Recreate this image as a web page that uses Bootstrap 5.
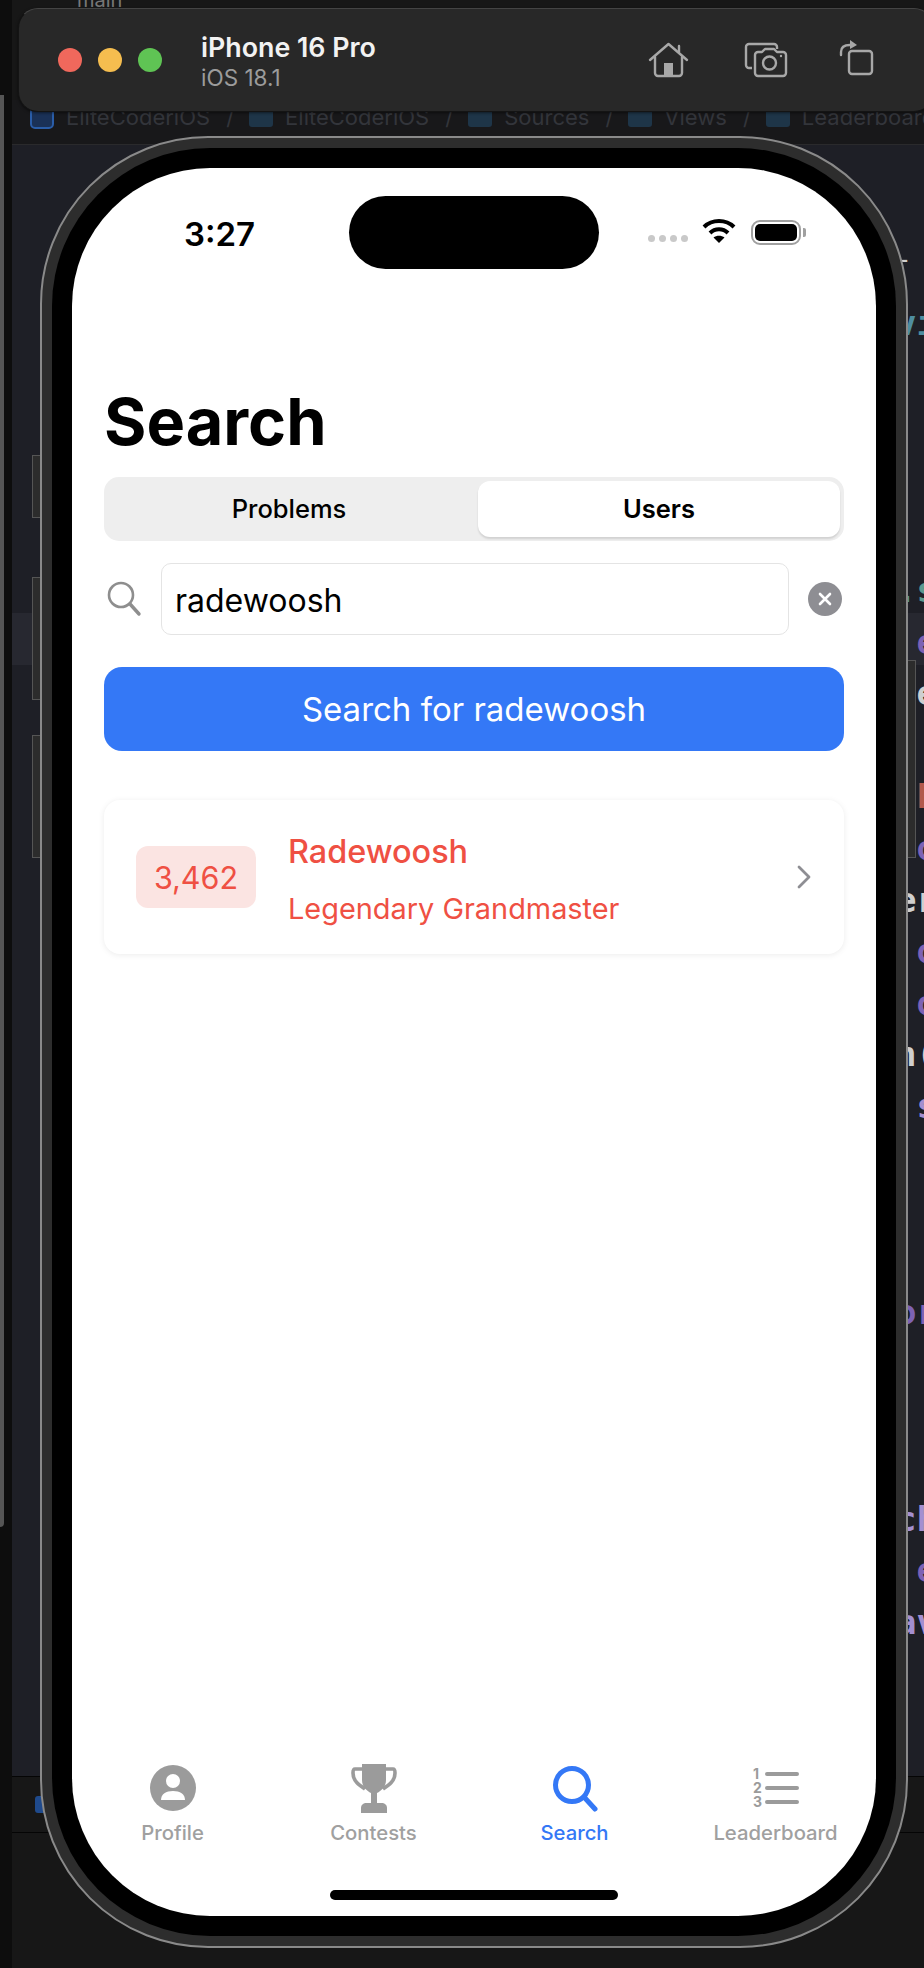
<!DOCTYPE html>
<html lang="en">
<head>
  <meta charset="UTF-8">
  <title>iPhone 16 Pro - Search</title>
  <link href="https://cdn.jsdelivr.net/npm/bootstrap@5.3.3/dist/css/bootstrap.min.css" rel="stylesheet">
  <style>
    html, body { width: 924px; height: 1968px; overflow: hidden; }
    body { background: #171717; font-family: Inter, "Liberation Sans", sans-serif; position: relative; }

    /* xcode window behind the simulator */
    .side-strip { width: 12px; background: #0d0d0d; }
    .side-strip-bar { width: 4px; height: 1432px; margin-top: 95px; background: #555; border-radius: 0 0 4px 0; }
    .top-strip { height: 100px; color: #777; font-size: 20px; line-height: 1; padding-left: 65px; }
    .top-strip-label { margin-top: -10px; }
    .crumbs { height: 45px; padding-left: 18px; padding-bottom: 10px; gap: 12px; color: #33353b; font-size: 22px; white-space: nowrap; background: #18181a; border-bottom: 1px solid #2a2a2c; overflow: hidden; }
    .crumb-folder { width: 24px; height: 20px; background: #1e3548; border-radius: 3px; flex: none; }
    .crumb-app { width: 24px; height: 24px; border: 2px solid #2a5da8; background: #1a3157; border-radius: 5px; flex: none; }
    .crumb-sep { margin: 0 3px 0 4px; }
    .editor { background: #1e1f26; position: relative; overflow: hidden; }
    .line-band { height: 52px; margin-top: 468px; background: #272830; }
    .code-rows { position: absolute; left: 884px; top: 89px; font-family: "DejaVu Sans Mono", monospace; font-weight: 700; font-size: 34px; line-height: 51.6px; }
    .code-rows div { height: 51.6px; white-space: pre; }
    .code-rows .row-dash { height: 64px; font-weight: 400; font-size: 26px; }
    .code-rows .row-first { height: 60.6px; }
    .c-teal { color: #5c9a90; }
    .c-blue { color: #4f8ea0; }
    .c-purple { color: #7d62b4; }
    .c-lilac { color: #a48fd0; }
    .c-grey { color: #cfcfcf; }
    .c-red { color: #b2594c; }
    .debug-bar { height: 57px; border-top: 1px solid #050505; border-bottom: 1px solid #050505; }
    .debug-blue { width: 14px; height: 17px; margin: 19px 0 0 23px; background: #1f4a8c; border-radius: 3px; }
    .bottom-panel { height: 135px; }

    /* simulator toolbar */
    .sim-toolbar { position: absolute; left: 18px; top: 8px; width: 916px; height: 104px; background: #282828; border: 1px solid #141414; border-top-color: #444; border-radius: 20px; padding-left: 39px; box-shadow: 0 1px 3px rgba(0,0,0,.5); }
    .light { width: 24px; height: 24px; border-radius: 50%; margin-right: 16px; }
    .light-red { background: #f0685c; }
    .light-yellow { background: #f5bd4f; }
    .light-green { background: #5fc454; }
    .sim-title { margin-left: 23px; padding-top: 4px; color: #f2f2f2; font-weight: 600; font-size: 26.8px; line-height: 31px; }
    .sim-sub { color: #9c9c9c; font-weight: 400; font-size: 22.5px; line-height: 29px; }
    .sim-icon { position: absolute; }
    .sim-home { left: 629px; top: 33px; }
    .sim-camera { left: 725px; top: 33px; }
    .sim-rotate { left: 820px; top: 29px; }

    /* phone */
    .phone-btn { position: absolute; background: #2c2c2c; border: 1px solid #555; }
    .phone-btn-1 { left: 32px; top: 455px; width: 12px; height: 63px; }
    .phone-btn-2 { left: 32px; top: 577px; width: 12px; height: 123px; }
    .phone-btn-3 { left: 32px; top: 735px; width: 12px; height: 123px; }
    .phone-btn-4 { left: 904px; top: 660px; width: 12px; height: 198px; }
    .phone { position: absolute; left: 40px; top: 136px; width: 868px; height: 1812px; border: 2px solid #8a8a8a; border-radius: 168px; background: #2d2d2d; padding: 10px; }
    .phone-black { height: 100%; background: #000; border-radius: 158px; padding: 20px; }
    .screen { height: 100%; background: #fff; border-radius: 138px; overflow: hidden; }

    .status-row { height: 101px; padding-top: 28px; }
    .status-time { width: 277px; padding-left: 112px; padding-top: 14px; font-weight: 600; font-size: 33px; color: #000; }
    .island { width: 250px; height: 73px; background: #000; border-radius: 37px; flex: none; }
    .signal-dots { gap: 4px; margin-left: 49px; margin-top: 39px; }
    .signal-dot { width: 7px; height: 7px; border-radius: 50%; background: #c9c9c9; }
    .wifi-icon { margin-left: 14px; margin-top: 22px; }
    .battery { width: 50px; height: 25px; margin-left: 15px; margin-top: 24px; border: 2px solid #a0a0a0; border-radius: 9px; padding: 2px; position: relative; }
    .battery-fill { height: 100%; background: #000; border-radius: 5px; }
    .battery-nub { position: absolute; right: -7px; top: 6px; width: 3px; height: 9px; background: #a0a0a0; border-radius: 0 2px 2px 0; }

    .search-title { margin: 113px 32px 16px; font-weight: 700; font-size: 64.8px; line-height: 79px; color: #000; }
    .seg-bar { margin: 0 32px 22px; height: 64px; background: #eeeeee; border-radius: 15px; padding: 4px; }
    .seg-item { font-size: 25.5px; font-weight: 500; color: #000; text-align: center; line-height: 56px; }
    .seg-plain { flex: 1 1 0; padding-right: 8px; }
    .seg-active { width: 362px; flex: none; background: #fff; font-weight: 600; border-radius: 12px; box-shadow: 0 2px 2px rgba(0,0,0,.12); }
    .search-row { margin: 0 32px 33px; height: 71px; }
    .search-glass { margin-left: 2px; }
    .search-input.form-control { height: 72px; flex: 1 1 0; margin: 0 19px 0 19px; padding: 4px 13px 0; font-family: inherit; font-size: 32px; color: #000; border: 1px solid #e4e4e4; border-radius: 10px; box-shadow: none; }
    .clear-btn { width: 34px; height: 34px; border-radius: 50%; background: #8e8e93; margin-right: 2px; }
    .search-btn.btn { display: block; width: calc(100% - 64px); margin: 0 32px 49px; padding-top: 8px; height: 84px; background: #3478f6; border: 0; border-radius: 18px; color: #fff; font-size: 33px; }
    .result-card.card { margin: 0 32px; height: 154px; flex-direction: row; align-items: center; border: 0; border-radius: 16px; padding: 0 32px; box-shadow: 0 1px 6px rgba(0,0,0,.08); }
    .rating-chip { width: 120px; height: 62px; background: #fbe4e2; color: #ef5043; border-radius: 12px; font-size: 30.5px; line-height: 63px; text-align: center; flex: none; }
    .result-text { margin-left: 32px; padding-top: 7px; color: #ef5043; }
    .result-name { font-size: 32.4px; font-weight: 500; line-height: 38px; margin-bottom: 19px; }
    .result-sub { font-size: 28.9px; line-height: 38px; }

    .tab-bar { margin-top: auto; }
    .tab-item { width: 25%; color: #a0a0a0; font-size: 20.3px; font-weight: 500; line-height: 24px; text-align: center; }
    .tab-icon { height: 50px; margin-bottom: 8px; }
    .tab-on { color: #3478f6; }
    .home-line { width: 288px; height: 10px; margin: 45px auto 16px; background: #000; border-radius: 5px; }
  </style>
</head>
<body class="d-flex">
  <div class="side-strip flex-shrink-0"><div class="side-strip-bar"></div></div>

  <div class="d-flex flex-column flex-grow-1">
    <div class="top-strip"><div class="top-strip-label">main</div></div>
    <div class="crumbs d-flex align-items-center">
      <span class="crumb-app"></span><span>EliteCoderiOS</span><span class="crumb-sep">/</span>
      <span class="crumb-folder"></span><span>EliteCoderiOS</span><span class="crumb-sep">/</span>
      <span class="crumb-folder"></span><span>Sources</span><span class="crumb-sep">/</span>
      <span class="crumb-folder"></span><span>Views</span><span class="crumb-sep">/</span>
      <span class="crumb-folder"></span><span>Leaderboard</span>
    </div>
    <div class="editor flex-grow-1">
      <div class="line-band"></div>
      <div class="code-rows">
        <div class="c-grey row-dash">-</div>
        <div class="c-blue row-first">vi</div>
        <div></div>
        <div></div>
        <div></div>
        <div></div>
        <div class="c-teal">.s</div>
        <div class="c-purple"> e</div>
        <div class="c-grey"> e</div>
        <div></div>
        <div class="c-red"> E</div>
        <div class="c-purple"> o</div>
        <div class="c-grey">er</div>
        <div class="c-purple"> o</div>
        <div class="c-purple"> o</div>
        <div class="c-grey">n(</div>
        <div class="c-lilac"> s</div>
        <div></div>
        <div></div>
        <div></div>
        <div class="c-purple">or</div>
        <div></div>
        <div></div>
        <div></div>
        <div class="c-lilac">ch</div>
        <div class="c-purple"> e</div>
        <div class="c-lilac">av</div>
      </div>
    </div>
    <div class="debug-bar"><div class="debug-blue"></div></div>
    <div class="bottom-panel"></div>
  </div>

  <!-- simulator chrome sits on top of the xcode window -->
  <div class="sim-toolbar d-flex align-items-center">
    <span class="light light-red"></span>
    <span class="light light-yellow"></span>
    <span class="light light-green"></span>
    <div class="sim-title">iPhone 16 Pro<div class="sim-sub">iOS 18.1</div></div>

    <svg class="sim-icon sim-home" width="41" height="36" viewBox="0 0 41 36" fill="none" stroke="#a8a8a8" stroke-width="2.4" stroke-linecap="round" stroke-linejoin="round">
      <path d="M2 18 20.5 2 39 18"/>
      <path d="M7 15V31a3 3 0 0 0 3 3H31a3 3 0 0 0 3-3V15"/>
      <path d="M31 10V4"/>
      <rect x="16" y="21" width="9" height="13" fill="#a8a8a8" stroke="none"/>
    </svg>
    <svg class="sim-icon sim-camera" width="44" height="36" viewBox="0 0 44 36" fill="none" stroke="#a8a8a8" stroke-width="2.4" stroke-linejoin="round">
      <path d="M8 26H5a3 3 0 0 1-3-3V5a3 3 0 0 1 3-3H30a3 3 0 0 1 3 3V7"/>
      <path d="M11 13a3 3 0 0 1 3-3h4l3-3h9l3 3h6a3 3 0 0 1 3 3V31a3 3 0 0 1-3 3H14a3 3 0 0 1-3-3Z"/>
      <circle cx="25.5" cy="21" r="6.5"/>
      <circle cx="37" cy="14" r="1.2" fill="#a8a8a8" stroke="none"/>
    </svg>
    <svg class="sim-icon sim-rotate" width="36" height="38" viewBox="0 0 36 38" fill="none" stroke="#a8a8a8" stroke-width="2.4" stroke-linejoin="round">
      <rect x="10" y="13" width="23" height="23" rx="3"/>
      <path d="M2 17V14C2 9 6 7 11 7" stroke-linecap="round"/>
      <path d="M11 2 18 7 11 11Z" fill="#a8a8a8" stroke="none"/>
    </svg>
  </div>

  <span class="phone-btn phone-btn-1"></span>
  <span class="phone-btn phone-btn-2"></span>
  <span class="phone-btn phone-btn-3"></span>
  <span class="phone-btn phone-btn-4"></span>

  <div class="phone">
    <div class="phone-black">
      <div class="screen d-flex flex-column">

        <div class="status-row d-flex">
          <div class="status-time">3:27</div>
          <div class="island"></div>
          <div class="signal-dots d-flex">
            <span class="signal-dot"></span><span class="signal-dot"></span><span class="signal-dot"></span><span class="signal-dot"></span>
          </div>
          <svg class="wifi-icon" width="34" height="25" viewBox="0 0 34 25" fill="none" stroke="#000" stroke-width="4">
            <path d="M2 9C10 1 24 1 32 9"/>
            <path d="M8 15C13 10 21 10 26 15"/>
            <path d="M17 25 11.5 19.5C14.5 17 19.5 17 22.5 19.5Z" fill="#000" stroke="none"/>
          </svg>
          <div class="battery"><div class="battery-fill"></div><span class="battery-nub"></span></div>
        </div>

        <h1 class="search-title">Search</h1>

        <div class="seg-bar d-flex">
          <div class="seg-item seg-plain">Problems</div>
          <div class="seg-item seg-active">Users</div>
        </div>

        <div class="search-row d-flex align-items-center">
          <svg class="search-glass" width="36" height="36" viewBox="0 0 36 36" fill="none" stroke="#8e8e8e" stroke-width="2.6" stroke-linecap="round">
            <circle cx="15" cy="14" r="12"/>
            <path d="M24 23 33 33" stroke-width="3.4"/>
          </svg>
          <input type="text" class="form-control search-input" value="radewoosh">
          <div class="clear-btn d-flex align-items-center justify-content-center">
            <svg width="16" height="16" viewBox="0 0 16 16" stroke="#fff" stroke-width="2.6" stroke-linecap="round"><path d="M3 3 13 13M13 3 3 13"/></svg>
          </div>
        </div>

        <button type="button" class="btn search-btn">Search for radewoosh</button>

        <div class="card result-card">
          <div class="rating-chip">3,462</div>
          <div class="result-text flex-grow-1">
            <div class="result-name">Radewoosh</div>
            <div class="result-sub">Legendary Grandmaster</div>
          </div>
          <svg width="16" height="24" viewBox="0 0 16 24" fill="none" stroke="#8e8e93" stroke-width="2.8" stroke-linecap="round" stroke-linejoin="round"><path d="M3 2 13 12 3 22"/></svg>
        </div>

        <div class="tab-bar d-flex">
          <div class="tab-item">
            <div class="tab-icon">
              <svg width="46" height="50" viewBox="0 0 46 50">
                <circle cx="23" cy="25" r="23" fill="#9b9b9b"/>
                <circle cx="23" cy="18" r="7" fill="#fff"/>
                <path d="M11 37C11 31 16 28 23 28S35 31 35 37Z" fill="#fff"/>
              </svg>
            </div>
            Profile
          </div>
          <div class="tab-item">
            <div class="tab-icon">
              <svg width="46" height="50" viewBox="0 0 46 50">
                <path d="M11 1H35V17C35 24 30 28 26 30V40H30C34 40 36 42 36 45V50H10V45C10 42 12 40 16 40H20V30C16 28 11 24 11 17Z" fill="#9b9b9b"/>
                <path d="M11 6H4C2 6 2 8 2 10 2 18 8 22 14 26M35 6H42C44 6 44 8 44 10 44 18 38 22 32 26" fill="none" stroke="#9b9b9b" stroke-width="3.6"/>
              </svg>
            </div>
            Contests
          </div>
          <div class="tab-item tab-on">
            <div class="tab-icon">
              <svg width="46" height="50" viewBox="0 0 46 50" fill="none" stroke="#3478f6" stroke-width="5" stroke-linecap="round">
                <circle cx="20" cy="22" r="16.5"/>
                <path d="M32 34 43 46"/>
              </svg>
            </div>
            Search
          </div>
          <div class="tab-item">
            <div class="tab-icon">
              <svg width="48" height="50" viewBox="0 0 48 50" fill="#9b9b9b" stroke="none" font-family="Inter, sans-serif" font-weight="700" font-size="14">
                <text x="1" y="16">1</text>
                <text x="1" y="30">2</text>
                <text x="1" y="44">3</text>
                <g stroke="#9b9b9b" stroke-width="4" stroke-linecap="round">
                  <path d="M15 11H45M15 25H45M15 39H45"/>
                </g>
              </svg>
            </div>
            Leaderboard
          </div>
        </div>
        <div class="home-line"></div>

      </div>
    </div>
  </div>
</body>
</html>
